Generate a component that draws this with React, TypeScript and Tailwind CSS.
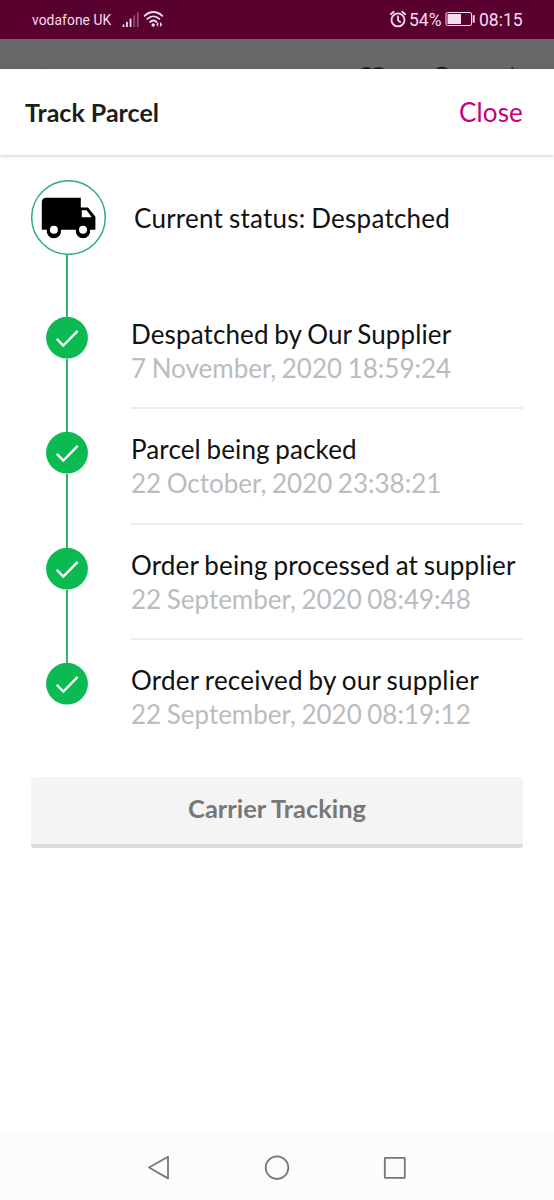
import React from "react";

type Step = { title: string; date: string; tracking: string };

const steps: Step[] = [
  { title: "Despatched by Our Supplier", date: "7 November, 2020 18:59:24", tracking: "tracking-[0.12px]" },
  { title: "Parcel being packed", date: "22 October, 2020 23:38:21", tracking: "tracking-[0.12px]" },
  { title: "Order being processed at supplier", date: "22 September, 2020 08:49:48", tracking: "tracking-[0.17px]" },
  { title: "Order received by our supplier", date: "22 September, 2020 08:19:12", tracking: "tracking-[0.24px]" },
];

function StatusBar() {
  return (
    <div className="flex h-[38.5px] shrink-0 items-center bg-[#5a0030] pb-px pl-8 pr-[31px] font-[Roboto,sans-serif] text-[#f6dcec]">
      <span className="w-[90px] whitespace-nowrap pt-[2px] text-[13.8px] leading-5 tracking-[0.08px]">vodafone UK</span>
      <svg className="h-[18px] w-[18px]" viewBox="0 0 18 18" fill="currentColor">
        <rect x="0.6" y="14.500" width="1.800" height="2.500" />
        <rect x="4" y="11.800" width="1.800" height="5.200" />
        <rect x="7.600" y="8.600" width="1.800" height="8.400" />
        <rect x="11.300" y="5.400" width="1.800" height="11.600" opacity="0.35" />
        <rect x="14.900" y="2.200" width="1.800" height="14.800" opacity="0.35" />
      </svg>
      <svg className="ml-[3px] h-[18px] w-[21px]" viewBox="0 0 21 18" fill="none" stroke="currentColor" strokeWidth="1.8" strokeLinecap="round">
        <path d="M1.6 5.8C6.8 .7 14 .7 19.2 5.8" />
        <path d="M4.3 8.9c3.7-3.5 8.4-3.5 12.1 0" />
        <path d="M7.1 12c2-1.9 4.5-1.9 6.5 0" />
        <circle cx="10.2" cy="15" r="1.7" fill="currentColor" stroke="none" />
        <path d="M15.3 12v5l-2-2.5zM17 12v5l2.3-2.5z" fill="currentColor" stroke="none" />
      </svg>
      <span className="flex-1" />
      <svg className="mr-px h-[18px] w-[17px]" viewBox="0 0 17 18" fill="none" stroke="currentColor" strokeWidth="1.8" strokeLinecap="round" strokeLinejoin="round">
        <circle cx="8" cy="9.9" r="6.5" />
        <path d="M8 6.4v3.9l2.2 1.8M.9 4.2l2.8-2.4M15.1 4.2l-2.8-2.4" />
      </svg>
      <span className="ml-px w-[36px] whitespace-nowrap pt-[2px] text-[17.5px] leading-5">54%</span>
      <svg className="h-[16px] w-[31px]" viewBox="0 0 31 16" fill="none">
        <rect x="1" y="1.5" width="25.5" height="13" rx="1.5" stroke="currentColor" strokeWidth="1" />
        <rect x="2.5" y="3" width="13.5" height="10" fill="currentColor" />
        <path d="M28.7 4.2v7.6" stroke="currentColor" strokeWidth="2" />
      </svg>
      <span className="ml-[3px] w-[44px] whitespace-nowrap pt-[2px] text-[17.5px] leading-5">08:15</span>
    </div>
  );
}

function Backdrop() {
  return (
    <div className="h-[30.5px] shrink-0 bg-[#686868]">
      <svg className="h-full w-full" viewBox="0 0 554 30.5" fill="none" stroke="#1d1d1d" strokeWidth="2">
        <path d="M361 31q5.500-4 11 0M373 31q5.500-4 11 0M436 31q6-4.500 12 0M511 31l2-2" />
        <path d="M41 30l2-1.500" stroke="#555" strokeWidth="1" />
      </svg>
    </div>
  );
}

function TruckBadge() {
  return (
    <svg className="size-[75px] shrink-0" viewBox="0 0 75 75">
      <circle cx="37.500" cy="37.500" r="36.800" fill="none" stroke="#31b273" strokeWidth="1.500" />
      <path
        transform="translate(10.800 17.800)"
        fill="#000"
        fillRule="evenodd"
        d="M4.500 0H39v9.700h7.200L53.600 19v13H48.300a7.200 7.200 0 1 1-14.200 0H19.200a7.200 7.200 0 1 1-14.200 0H0V4.500Q0 0 4.500 0ZM40 12.500V19.500H50L44.800 12.500ZM12.100 28a4 4 0 1 0 0 8 4 4 0 0 0 0-8ZM41.200 28a4 4 0 1 0 0 8 4 4 0 0 0 0-8Z"
      />
    </svg>
  );
}

function CheckDot() {
  return (
    <svg className="size-[42px] shrink-0" viewBox="0 0 42 42" fill="none">
      <circle cx="21" cy="20.700" r="20.900" fill="#0cba52" />
      <path d="M10.800 21.800l6.500 6.700L31.700 13.900" stroke="#fff" strokeWidth="2.400" />
    </svg>
  );
}

function TimelineItem({ step, last }: { step: Step; last: boolean }) {
  return (
    <li className="flex h-[115.4px]">
      <div className="flex w-[42px] shrink-0 flex-col items-center">
        <div className="h-[23px] w-[1.600px] shrink-0 bg-[#31b273]" />
        <CheckDot />
        {!last && <div className="w-[1.600px] flex-1 bg-[#31b273]" />}
      </div>
      <div className={`ml-[43px] flex-1 whitespace-nowrap pt-[23px] text-[26px] leading-[34px] ${last ? "" : "border-b-2 border-[#ececec]"}`}>
        <p className={`text-[#111] [word-spacing:-1.1px] ${step.tracking}`}>{step.title}</p>
        <p className="text-[#babcc0] [word-spacing:-1.1px]">{step.date}</p>
      </div>
    </li>
  );
}

export default function App() {
  return (
    <div className="flex h-[1200px] w-[554px] flex-col overflow-hidden bg-white font-[Lato,sans-serif]">
      <StatusBar />
      <Backdrop />
      <header className="z-10 flex h-[86px] shrink-0 items-center justify-between bg-white pl-[25px] pr-[31px] shadow-[0_1px_4px_rgba(0,0,0,0.2)]">
        <h1 className="text-[25px] font-bold leading-[34px] text-[#1d1d1d]">Track Parcel</h1>
        <button className="text-[26px] leading-[34px] tracking-[0.15px] text-[#c4007a]">Close</button>
      </header>
      <main className="flex flex-1 flex-col pl-[31px] pr-[31px] pt-[25px]">
        <div className="flex h-[75px] items-center">
          <TruckBadge />
          <p className="ml-[28px] whitespace-nowrap text-[26px] leading-[34px] tracking-[0.24px] text-[#111] [word-spacing:-1.1px]">
            Current status: Despatched
          </p>
        </div>
        <div className="ml-[15px] flex h-[39px] w-[42px] justify-center">
          <div className="w-[1.600px] bg-[#31b273]" />
        </div>
        <ol className="ml-[15px]">
          {steps.map((step, i) => (
            <TimelineItem key={step.title} step={step} last={i === steps.length - 1} />
          ))}
        </ol>
        <button className="mt-[21.400px] flex h-[71px] shrink-0 items-center justify-center rounded-[3px] border-b-4 border-[#dcdcdc] bg-[#f4f4f4] pb-[4px] text-[25.400px] font-bold leading-[34px] text-[#777]">
          Carrier Tracking
        </button>
      </main>
      <nav className="flex h-[66px] shrink-0 items-center justify-center bg-[#fcfcfc] pt-[2px]">
        <svg className="h-[30px] w-[270px]" viewBox="0 0 270 30" fill="none" stroke="#777" strokeWidth="1.800" strokeLinejoin="round">
          <path d="M7 14.500L26 3.800V25.400Z" />
          <circle cx="135" cy="14.700" r="11.300" />
          <rect x="242.800" y="4.900" width="20" height="20" rx="0.500" />
        </svg>
      </nav>
    </div>
  );
}
